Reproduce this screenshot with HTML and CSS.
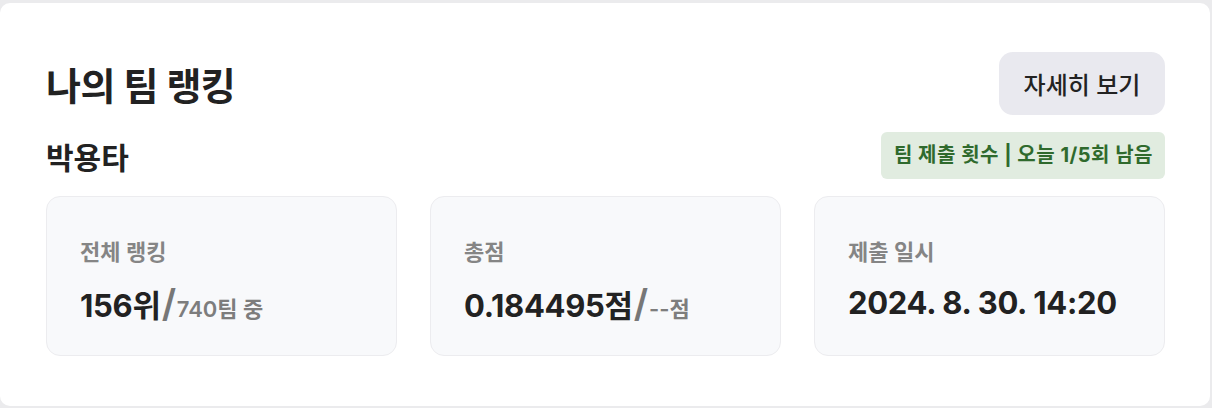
FILE: index.html
```html
<!DOCTYPE html>
<html lang="ko">
<head>
    <meta charset="UTF-8">
    <meta name="viewport" content="width=device-width, initial-scale=1.0">
    <title>나의 팀 랭킹</title>
    <link rel="stylesheet" href="styles.css">
</head>
<body>
    <!-- team ranking card -->
    <section class="rankCard">
        <div class="cardTop">
            <h1>나의 팀 랭킹</h1>
            <button class="moreBtn">자세히 보기</button>
        </div>
        <div class="teamRow">
            <h2>박용타</h2>
            <span class="badge">팀 제출 횟수 | 오늘 1/5회 남음</span>
        </div>

        <!-- stats -->
        <div class="statList">
            <div class="statBox">
                <p class="label">전체 랭킹</p>
                <p class="value">156위<span class="slash">/</span><span class="sub">740팀 중</span></p>
            </div>
            <div class="statBox">
                <p class="label">총점</p>
                <p class="value">0.184495점<span class="slash">/</span><span class="sub">--점</span></p>
            </div>
            <div class="statBox">
                <p class="label">제출 일시</p>
                <p class="value">2024. 8. 30. 14:20</p>
            </div>
        </div>
    </section>
</body>
</html>
```

FILE: styles.css
```css
* {
    padding: 0px;
    margin: 0px;
    box-sizing: border-box;
}
body {
    background-color: #ebebed;
    color: #222;
    font-family: Inter, "Noto Sans CJK KR", sans-serif;
    padding-top: 3px;
    padding-right: 2px;
}
.rankCard {
    background-color: white;
    border-radius: 10px;
    height: 403px;
    padding: 49px 45px 50px 46px;
}
.cardTop {
    display: flex;
    justify-content: space-between;
    align-items: center;
}
.cardTop h1 {
    font-size: 38px;
    font-weight: 700;
    letter-spacing: -0.5px;
}
.moreBtn {
    font-family: inherit;
    background-color: #e9e9ef;
    border: none;
    border-radius: 14px;
    height: 63px;
    width: 166px;
    font-size: 24px;
    font-weight: 500;
    color: #222;
}
.teamRow {
    margin-top: 17px;
    display: flex;
    justify-content: space-between;
    align-items: center;
}
.teamRow h2 {
    font-size: 30px;
    font-weight: 700;
}
.badge {
    background-color: #e1ece0;
    color: #2f6a2d;
    font-size: 20px;
    font-weight: 700;
    letter-spacing: 0.5px;
    border-radius: 6px;
    padding: 0 12px 0 13px;
    height: 47px;
    line-height: 47px;
}
.statList {
    margin-top: 17px;
    display: grid;
    grid-template-columns: repeat(3, 1fr);
    gap: 33px;
}
.statBox {
    background-color: #f8f9fb;
    border: 1px solid #ececef;
    border-radius: 14px;
    height: 160px;
    padding: 42px 33px 0px;
}
.statBox .label {
    color: #858585;
    font-size: 22px;
    line-height: 26px;
    font-weight: 600;
}
.statBox .value {
    margin-top: 20px;
    font-size: 31px;
    line-height: 36px;
    font-weight: 700;
    letter-spacing: -0.3px;
    color: #222;
    display: flex;
    align-items: baseline;
}
.slash {
    color: #777;
    font-size: 38px;
    font-weight: 600;
    margin: 0 1px;
}
.sub {
    color: #7d7d7d;
    font-size: 22px;
    font-weight: 600;
    letter-spacing: 0px;
}
```
